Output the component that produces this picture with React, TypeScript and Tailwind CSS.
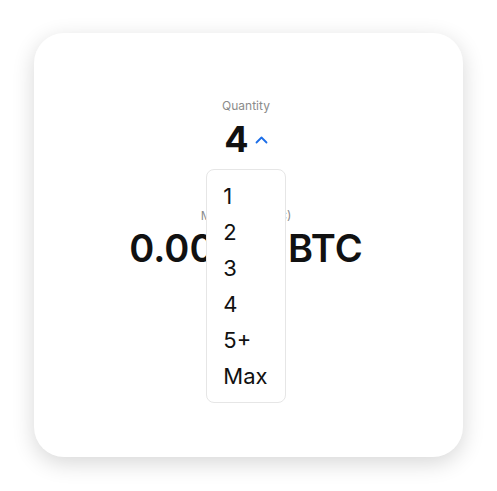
import { useState } from "react";

const options = ["1", "2", "3", "4", "5+", "Max"];

function ChevronUp() {
  return (
    <svg width="13" height="8" viewBox="0 0 13 8" fill="none" className="mt-[2px]">
      <path d="M1.5 6.5L6.5 1.5L11.5 6.5" stroke="#1c6ee8" strokeWidth="1.8" strokeLinecap="round" strokeLinejoin="round" />
    </svg>
  );
}

export default function App() {
  const [quantity, setQuantity] = useState("4");
  const [open, setOpen] = useState(true);

  return (
    <div
      className="w-full h-[491px] bg-white pt-[33px] px-[34px]"
      style={{ fontFamily: "Inter, 'Noto Sans', sans-serif" }}
    >
      <div className="h-[424px] bg-white rounded-[30px] shadow-[0_6px_22px_rgba(0,0,0,0.16)] flex flex-col items-center pt-[65px] pr-[5px]">
        <span className="text-[12px] leading-4 text-[#8b8b8b]">Quantity</span>

        <div className="relative mt-[5px]">
          <button
            onClick={() => setOpen(!open)}
            className="flex items-center gap-[6px] px-[18px] h-[40px] cursor-pointer"
          >
            <span className="text-[36px] leading-none font-bold text-[#111]">{quantity}</span>
            <ChevronUp />
          </button>

          {open && (
            <div className="absolute left-0 right-0 top-full mt-[10px] z-10 bg-white border border-[#e6e6e6] rounded-lg py-[8px]">
              {options.map((opt) => (
                <div
                  key={opt}
                  onClick={() => {
                    setQuantity(opt);
                    setOpen(false);
                  }}
                  className="h-[36px] flex items-center pl-[16px] text-[22px] text-[#111] cursor-pointer"
                >
                  {opt}
                </div>
              ))}
            </div>
          )}
        </div>

        <span className="mt-[49px] text-[12px] leading-4 text-[#8b8b8b]">Max Total (BTC)</span>
        <span className="mt-[2px] text-[38px] leading-[44px] font-semibold text-[#111]">
          0.00123 BTC
        </span>
      </div>
    </div>
  );
}
